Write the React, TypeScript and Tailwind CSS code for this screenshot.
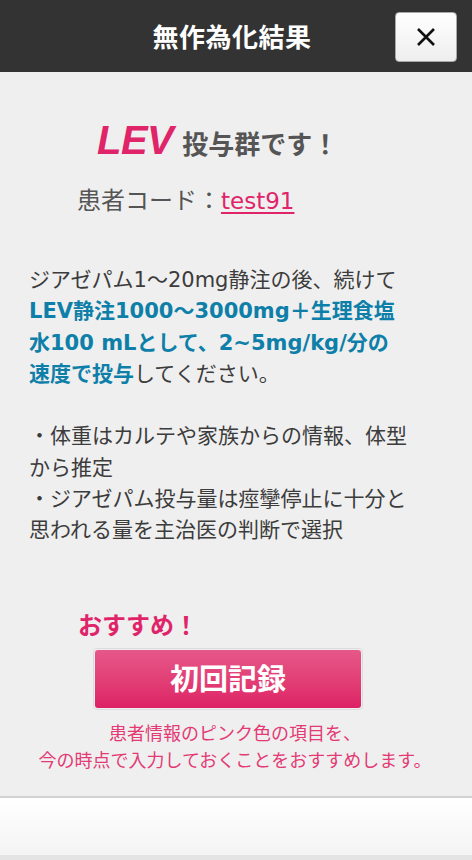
import React from "react";

const JP = { fontFamily: '"Noto Sans CJK JP", "Noto Sans", sans-serif' };
const MIX = { fontFamily: '"DejaVu Sans", "Noto Sans CJK JP", sans-serif' };

export default function App() {
  return (
    <div
      className="w-[472px] h-[860px] flex flex-col bg-[#efefef] overflow-hidden"
      style={JP}
    >
      {/* header */}
      <div className="relative h-[72px] shrink-0 bg-[#333333] flex items-center justify-center pr-[8px]">
        <h1 className="text-white font-bold text-[26px] leading-none tracking-[0.5px]">
          無作為化結果
        </h1>
        <button className="absolute right-[15px] top-[12px] w-[62px] h-[50px] rounded-[4px] border border-[#a8a8a8] bg-gradient-to-b from-[#ffffff] to-[#eeeeee] flex items-center justify-center">
          <svg width="20" height="20" viewBox="0 0 20 20">
            <path
              d="M2 2 L18 18 M18 2 L2 18"
              stroke="#111"
              strokeWidth="2.6"
              strokeLinecap="butt"
            />
          </svg>
        </button>
      </div>

      {/* body */}
      <div className="flex-1 flex flex-col">
        <div className="mt-[48px] pl-[97px] flex items-baseline">
          <span
            className="text-[40px] leading-none font-bold italic text-[#e0246a] tracking-[-0.5px]"
            style={{ fontFamily: '"Liberation Sans", Arial, sans-serif' }}
          >
            LEV
          </span>
          <span className="ml-[9px] text-[26px] leading-none font-bold text-[#555555]">
            投与群です！
          </span>
        </div>

        <div className="mt-[27px] pl-[77px] text-[24px] leading-none text-[#555555]">
          患者コード：
          <span
            className="text-[#e0246a] underline underline-offset-[3px] decoration-[1.5px] text-[23px]"
            style={MIX}
          >
            test91
          </span>
        </div>

        <p
          className="mt-[52px] pl-[29px] text-[21px] leading-[31.3px] text-[#3c3c3c] whitespace-nowrap"
          style={MIX}
        >
          ジアゼパム1～20mg静注の後、続けて
          <br />
          <span className="font-bold text-[#0e7fa8]">
            LEV静注1000～3000mg＋生理食塩
            <br />
            水100 mLとして、2~5mg/kg/分の
            <br />
            速度で投与
          </span>
          してください。
          <br />
          <br />
          ・体重はカルテや家族からの情報、体型
          <br />
          から推定
          <br />
          ・ジアゼパム投与量は痙攣停止に十分と
          <br />
          思われる量を主治医の判断で選択
        </p>

        <div className="mt-[65px] pl-[78px] text-[24px] leading-none font-bold text-[#e0246a]">
          おすすめ！
        </div>

        <div className="mt-[12px] ml-[93px] w-[270px] h-[62px] rounded-[4px] border border-[#dcdcdc] p-px">
          <button className="w-full h-full rounded-[3px] bg-gradient-to-b from-[#e65789] to-[#dd1f65] text-white font-bold text-[29px] leading-none flex items-center justify-center pb-[2px]">
            初回記録
          </button>
        </div>

        <div className="mt-[9px] w-full pr-[2px] text-center text-[18px] leading-[27px] text-[#e33a75]">
          患者情報のピンク色の項目を、
          <br />
          今の時点で入力しておくことをおすすめします。
        </div>
      </div>

      {/* footer */}
      <div className="h-[64px] shrink-0 flex flex-col border-t-2 border-[#d2d2d2]">
        <div className="flex-1 bg-gradient-to-b from-[#ffffff] to-[#f4f4f4]" />
        <div className="h-[5px] bg-[#e4e4e4]" />
      </div>
    </div>
  );
}
